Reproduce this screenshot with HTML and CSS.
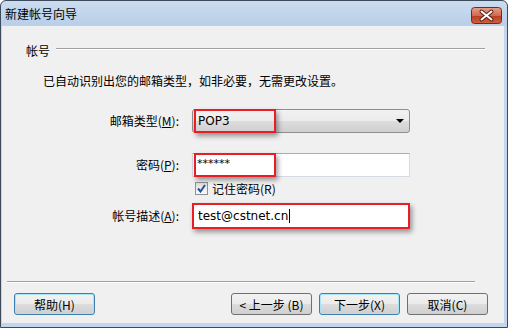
FILE: index.html
```html
<!DOCTYPE html>
<html lang="zh-CN">
<head>
    <meta charset="UTF-8">
    <title>新建帐号向导</title>
    <link rel="stylesheet" href="styles.css">
</head>
<body>
    <div class="window">
        <div class="titlebar">
            <span class="title">新建帐号向导</span>
            <svg class="close-btn" width="31" height="17" viewBox="0 0 31 17">
                <defs>
                    <linearGradient id="closeFill" x1="0" y1="0" x2="0" y2="1">
                        <stop offset="0" stop-color="#e6a08c"/>
                        <stop offset="0.5" stop-color="#d06a50"/>
                        <stop offset="0.51" stop-color="#b83e1e"/>
                        <stop offset="1" stop-color="#d0603f"/>
                    </linearGradient>
                </defs>
                <rect x="0.5" y="0.5" width="30" height="16" rx="3" fill="url(#closeFill)" stroke="#6e2c20"/>
                <path d="M10.5 4.5 L20.5 12.5 M20.5 4.5 L10.5 12.5" stroke="#5a2016" stroke-width="4" stroke-linecap="round"/>
                <path d="M10.5 4.5 L20.5 12.5 M20.5 4.5 L10.5 12.5" stroke="#ffffff" stroke-width="2" stroke-linecap="round"/>
            </svg>
        </div>
        <div class="client">
            <div class="group-head">
                <span>帐号</span>
                <div class="group-line"></div>
            </div>
            <p class="hint">已自动识别出您的邮箱类型，如非必要，无需更改设置。</p>

            <div class="row row-type">
                <label class="field-label">邮箱类型(<u>M</u>):</label>
                <div class="combo">
                    <span class="latin">POP3</span>
                    <span class="arrow"></span>
                    <div class="mark mark-short"></div>
                </div>
            </div>

            <div class="row row-pass">
                <label class="field-label">密码(<u>P</u>):</label>
                <div class="textbox">
                    <span class="latin stars">******</span>
                    <div class="mark mark-short"></div>
                </div>
            </div>

            <div class="row row-check">
                <span></span>
                <div class="check-line">
                    <span class="checkbox">
                        <svg width="9" height="9" viewBox="0 0 9 9">
                            <path d="M1 4.5 L3.5 7.5 L8 1" fill="none" stroke="#2a4f9a" stroke-width="2"/>
                        </svg>
                    </span>
                    <span>记住密码(R)</span>
                </div>
            </div>

            <div class="row row-desc">
                <label class="field-label">帐号描述(<u>A</u>):</label>
                <div class="textbox textbox-marked">
                    <span class="latin">test@cstnet.cn</span><span class="caret"></span>
                </div>
            </div>

            <div class="footer">
                <div class="separator"></div>
                <div class="buttons">
                    <button class="btn btn-blue">帮助(H)</button>
                    <div class="spacer"></div>
                    <button class="btn">&lt; 上一步 (B)</button>
                    <button class="btn btn-blue">下一步(X)</button>
                    <button class="btn">取消(C)</button>
                </div>
            </div>
        </div>
    </div>
</body>
</html>
```

FILE: styles.css
```css
body {
    margin: 0;
    background-color: white;
    font-family: "Noto Sans CJK SC", "Liberation Sans", sans-serif;
    font-size: 12px;
    color: black;
}
.window {
    width: 508px;
    height: 328px;
    box-sizing: border-box;
    border: 1px solid #3d4a5c;
    border-radius: 6px 6px 0 0;
    background: linear-gradient(#cbdcef, #b9cee8 24px, #c2d5ec 25px);
    display: flex;
    flex-direction: column;
}
.titlebar {
    height: 25px;
    display: flex;
    align-items: center;
    justify-content: space-between;
    padding: 0 5px 0 4px;
}
.title {
    line-height: 14px;
}
.close-btn {
    display: block;
    margin-top: 3px;
}
.client {
    flex: 1;
    margin: 0 3px 4px 1px;
    background-color: #f0f0f0;
    display: flex;
    flex-direction: column;
    padding: 18px 0 0 0;
}
.group-head {
    display: flex;
    align-items: center;
    padding-left: 24px;
    padding-right: 19px;
    height: 14px;
    line-height: 14px;
}
.group-line {
    flex: 1;
    height: 0;
    margin: -5px 0 0 6px;
    border-top: 1px solid #a0a0a0;
    border-bottom: 1px solid #ffffff;
}
.hint {
    margin: 16px 0 0 41px;
    line-height: 14px;
}
.row {
    display: grid;
    grid-template-columns: 177px 218px;
    column-gap: 13px;
    align-items: center;
}
.row-type {
    margin-top: 21px;
}
.row-pass {
    margin-top: 20px;
}
.row-check {
    margin-top: 4px;
}
.row-desc {
    margin-top: 8px;
}
.field-label {
    text-align: right;
    line-height: 14px;
}
.latin {
    font-family: "DejaVu Sans", "Liberation Sans", sans-serif;
    font-size: 12px;
}
.combo {
    position: relative;
    height: 22px;
    border: 1px solid #8e8f8f;
    border-radius: 3px;
    background: linear-gradient(#f2f2f2, #ebebeb 50%, #dddddd 51%, #cfcfcf);
    display: flex;
    align-items: center;
    padding-left: 5px;
}
.arrow {
    margin-left: auto;
    margin-right: 5px;
    width: 0;
    height: 0;
    border-left: 4px solid transparent;
    border-right: 4px solid transparent;
    border-top: 4px solid #000;
}
.textbox {
    position: relative;
    height: 22px;
    border: 1px solid #d5dbe3;
    border-top-color: #abadb3;
    background-color: white;
    display: flex;
    align-items: center;
    padding-left: 4px;
}
.stars {
    font-size: 11px;
    margin-top: -4px;
}
.mark {
    position: absolute;
    border: 2px solid #ec1c24;
    box-shadow: 2px 3px 5px rgba(0, 0, 0, 0.4);
    pointer-events: none;
}
.mark-short {
    left: 1px;
    top: -1px;
    width: 78px;
    height: 20px;
}
.textbox-marked {
    height: 22px;
    border: 2px solid #ec1c24;
    box-shadow: 2px 3px 5px rgba(0, 0, 0, 0.4);
}
.caret {
    display: inline-block;
    width: 1px;
    height: 14px;
    background-color: black;
    margin-left: 1px;
}
.check-line {
    display: flex;
    align-items: center;
    gap: 4px;
    padding-left: 3px;
    height: 14px;
}
.checkbox {
    width: 11px;
    height: 11px;
    border: 1px solid #8f8f8f;
    background: linear-gradient(#dedede, #fbfbfb);
    display: flex;
    align-items: center;
    justify-content: center;
}
.footer {
    margin-top: auto;
    padding-bottom: 8px;
}
.separator {
    margin: 0 29px 0 5px;
    border-top: 1px solid #a0a0a0;
    border-bottom: 1px solid #ffffff;
}
.buttons {
    display: flex;
    gap: 7px;
    padding: 10px 0 0 12px;
}
.spacer {
    width: 122px;
}
.btn {
    width: 81px;
    height: 22px;
    border: 1px solid #707070;
    border-radius: 3px;
    background: linear-gradient(#f2f2f2, #ebebeb 50%, #dddddd 51%, #cfcfcf);
    font-family: "Noto Sans CJK SC", "Liberation Sans", sans-serif;
    font-size: 12px;
    color: black;
    padding: 0;
}
.btn-blue {
    border-color: #3c7fb1;
    box-shadow: inset 0 0 0 1px #a8e4f8;
}
```
